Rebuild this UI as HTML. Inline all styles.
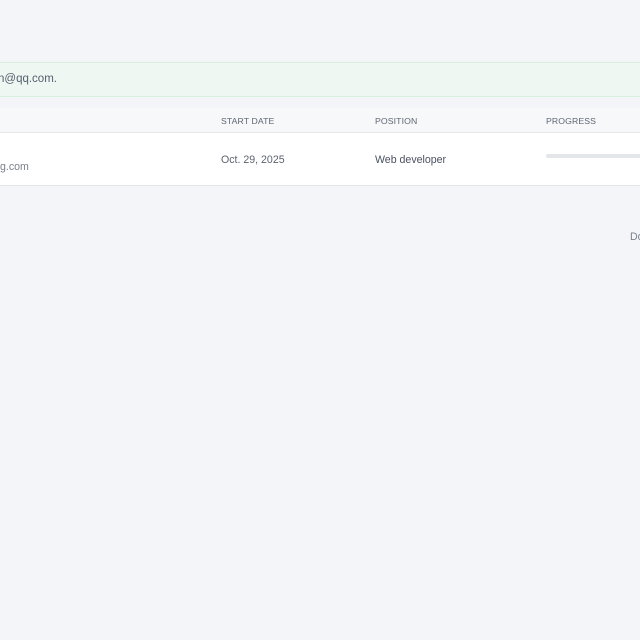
<!DOCTYPE html>
<html><head><meta charset="utf-8"><style>
html,body{margin:0;padding:0;width:640px;height:640px;overflow:hidden;background:#f4f5f9;font-family:"Liberation Sans",sans-serif;}
.alert{position:absolute;left:-2px;top:62px;width:660px;height:33px;background:#eff7f2;border-top:1px solid #d7efdc;border-bottom:1px solid #d7efdc;}
.alert span{position:absolute;left:0;top:10px;font-size:11.5px;color:#55606e;}
.thead{position:absolute;left:0;top:108px;width:640px;height:24px;background:#f7f8fa;border-bottom:1px solid #e6e8ec;}
.th{position:absolute;top:8px;font-size:8.7px;color:#5f6673;letter-spacing:.1px;}
.row{position:absolute;left:0;top:133px;width:640px;height:52px;background:#fff;border-bottom:1px solid #e4e6ea;}
.td{position:absolute;font-size:10.6px;color:#5b6270;}
.bar{position:absolute;left:546px;top:21px;width:100px;height:4px;border-radius:2px;background:#e5e6ea;}
</style></head><body>
<div class="alert"><span>n@qq.com.</span></div>
<div class="thead">
<div class="th" style="left:221px">START DATE</div>
<div class="th" style="left:375px">POSITION</div>
<div class="th" style="left:546px">PROGRESS</div>
</div>
<div class="row">
<div class="td" style="left:0;top:28px;color:#7a808c">g.com</div>
<div class="td" style="left:221px;top:21px">Oct. 29, 2025</div>
<div class="td" style="left:375px;top:21px;color:#4a5160">Web developer</div>
<div class="bar"></div>
</div>
<div class="td" style="left:630px;top:231px;color:#7a808c">Do</div>
</body></html>
